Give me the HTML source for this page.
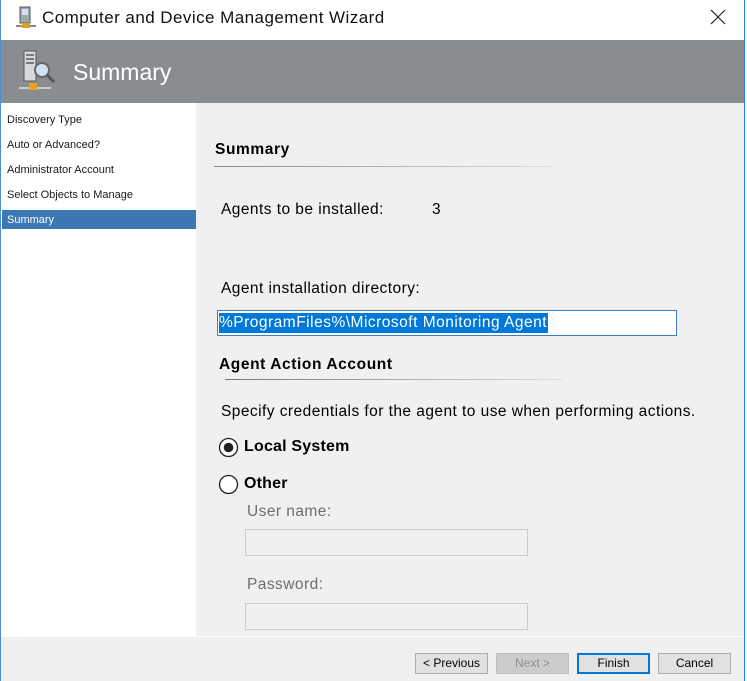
<!DOCTYPE html>
<html><head><meta charset="utf-8"><style>
*{margin:0;padding:0;box-sizing:border-box}
body{width:747px;height:681px;background:#fff;position:relative;overflow:hidden;font-family:"Liberation Sans",sans-serif;color:#000}
.a{position:absolute}
.win{left:0;top:0;width:745px;height:681px;border-left:1px solid #4a8fd6;border-right:1px solid #2b7fd8}
.t{white-space:nowrap}
.nav{font-size:11px;color:#1a1a1a}
.lbl{font-size:15.5px;letter-spacing:.45px}
.b{font-weight:bold}
.btn{top:653px;height:21px;width:73px;border:1px solid #adadad;background:#e1e1e1;font-size:12px;text-align:center;line-height:19px}
</style></head><body>
<div class="a win"></div>
<svg class="a" style="left:14px;top:6px" width="24" height="26" viewBox="0 0 24 26">
<rect x="6" y="1" width="10" height="16" fill="#9aa" stroke="#556" stroke-width="1"/>
<rect x="8" y="3" width="6" height="6" fill="#dde"/>
<rect x="2" y="19" width="20" height="2" fill="#888"/>
<rect x="8" y="17" width="8" height="5" fill="#e0a020"/>
</svg>
<div class="a t" style="left:42px;top:8px;font-size:17px;letter-spacing:.45px;color:#111">Computer and Device Management Wizard</div>
<svg class="a" style="left:710px;top:9px" width="16" height="16"><path d="M1 1L15 15M15 1L1 15" stroke="#222" stroke-width="1.2"/></svg>
<div class="a" style="left:1px;top:40px;width:743px;height:63px;background:#898d90"></div>
<svg class="a" style="left:16px;top:48px" width="42" height="46" viewBox="0 0 42 46">
<rect x="8" y="3" width="12" height="30" fill="#d7dadc" stroke="#555" stroke-width="1"/>
<rect x="10" y="6" width="8" height="2" fill="#777"/><rect x="10" y="10" width="8" height="2" fill="#777"/><rect x="10" y="14" width="8" height="2" fill="#777"/>
<circle cx="26" cy="22" r="7" fill="#cfe0ee" stroke="#666" stroke-width="2"/>
<path d="M31 27L38 34" stroke="#555" stroke-width="3"/>
<rect x="3" y="39" width="32" height="2" fill="#ccc"/>
<rect x="13" y="35" width="8" height="7" fill="#e6a224"/>
</svg>
<div class="a t" style="left:73px;top:59px;font-size:23px;color:#fff">Summary</div>
<div class="a" style="left:1px;top:103px;width:195px;height:534px;background:#fff"></div>
<div class="a t nav" style="left:7px;top:114px">Discovery Type</div>
<div class="a t nav" style="left:7px;top:139px">Auto or Advanced?</div>
<div class="a t nav" style="left:7px;top:164px">Administrator Account</div>
<div class="a t nav" style="left:7px;top:189px">Select Objects to Manage</div>
<div class="a" style="left:2px;top:210px;width:194px;height:19px;background:#3b78b5"></div>
<div class="a t nav" style="left:7px;top:214px;color:#fff">Summary</div>
<div class="a" style="left:196px;top:103px;width:548px;height:534px;background:#f0f0f0"></div>
<div class="a t b" style="left:215px;top:141px;font-size:15.5px;letter-spacing:.6px">Summary</div>
<div class="a" style="left:214px;top:166px;width:337px;height:1px;background:linear-gradient(90deg,#888,#ddd)"></div>
<div class="a t lbl" style="left:221px;top:201px">Agents to be installed:</div>
<div class="a t lbl" style="left:432px;top:201px">3</div>
<div class="a t lbl" style="left:221px;top:280px">Agent installation directory:</div>
<div class="a" style="left:217px;top:310px;width:460px;height:26px;background:#fff;border:1px solid #3c7fc6"></div>
<div class="a t" style="left:219px;top:313px;height:20px;background:#0078d7;color:#fff;font-size:15.5px;letter-spacing:.5px;line-height:20px;padding-right:1px">%ProgramFiles%\Microsoft Monitoring Agent</div>
<div class="a t b" style="left:219px;top:356px;font-size:15.5px;letter-spacing:.6px">Agent Action Account</div>
<div class="a" style="left:225px;top:379px;width:337px;height:1px;background:linear-gradient(90deg,#777,#ddd)"></div>
<div class="a t lbl" style="left:221px;top:403px">Specify credentials for the agent to use when performing actions.</div>
<svg class="a" style="left:218px;top:437px" width="21" height="21"><circle cx="10.5" cy="10.5" r="9" fill="#fff" stroke="#222" stroke-width="1.3"/><circle cx="10.5" cy="10.5" r="4.8" fill="#222"/></svg>
<div class="a t b" style="left:244px;top:438px;font-size:16px;letter-spacing:.2px">Local System</div>
<svg class="a" style="left:218px;top:474px" width="21" height="21"><circle cx="10.5" cy="10.5" r="9" fill="#fff" stroke="#222" stroke-width="1.3"/></svg>
<div class="a t b" style="left:244px;top:475px;font-size:16px;letter-spacing:.2px">Other</div>
<div class="a t lbl" style="left:247px;top:503px;color:#6d6d6d">User name:</div>
<div class="a" style="left:245px;top:529px;width:283px;height:27px;background:#f0f0f0;border:1px solid #ccc"></div>
<div class="a t lbl" style="left:247px;top:576px;color:#6d6d6d">Password:</div>
<div class="a" style="left:245px;top:603px;width:283px;height:27px;background:#f0f0f0;border:1px solid #ccc"></div>
<div class="a" style="left:1px;top:636px;width:743px;height:45px;background:#f0f0f0;border-top:1px solid #fff"></div>
<div class="a btn" style="left:415px">&lt; Previous</div>
<div class="a btn" style="left:496px;background:#cccccc;border-color:#bfbfbf;color:#8d8d8d">Next &gt;</div>
<div class="a btn" style="left:577px;border:2px solid #0078d7;line-height:17px">Finish</div>
<div class="a btn" style="left:658px">Cancel</div>
</body></html>
